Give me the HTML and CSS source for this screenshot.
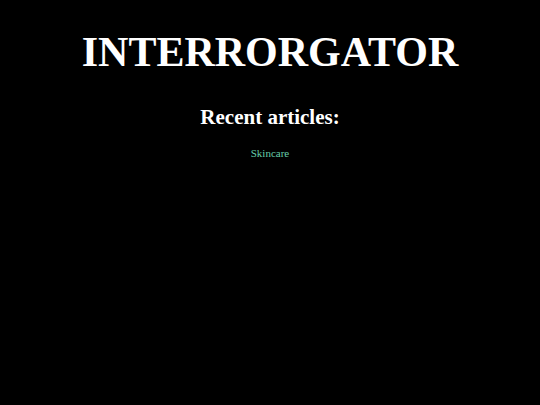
FILE: index.html
```html
<!DOCTYPE html>
<html>
<head>
<meta charset="utf-8">
<link rel="stylesheet" href="styles.css">
</head>
<body>
<div class="page">
  <h1 class="title">INTERRORGATOR</h1>
  <h2 class="subtitle">Recent articles:</h2>
  <ul class="articles">
    <li class="article"><a class="article-link" href="#">Skincare</a></li>
  </ul>
</div>
</body>
</html>
```

FILE: styles.css
```css
html, body {
  margin: 0;
  padding: 0;
  background: #000;
  height: 100%;
}
body {
  font-family: "Liberation Serif", "Times New Roman", serif;
  color: #fff;
}
.page {
  display: flex;
  flex-direction: column;
  align-items: center;
  padding-top: 28px;
}
.title {
  margin: 0;
  font-size: 42px;
  font-weight: bold;
  line-height: 48px;
}
.subtitle {
  margin: 29px 0 0;
  font-size: 21px;
  font-weight: bold;
  line-height: 24px;
}
.articles {
  list-style: none;
  margin: 18px 0 0;
  padding: 0;
}
.article {
  font-size: 11px;
  line-height: 13px;
}
.article-link {
  color: #66cdaa;
  text-decoration: none;
}
```
